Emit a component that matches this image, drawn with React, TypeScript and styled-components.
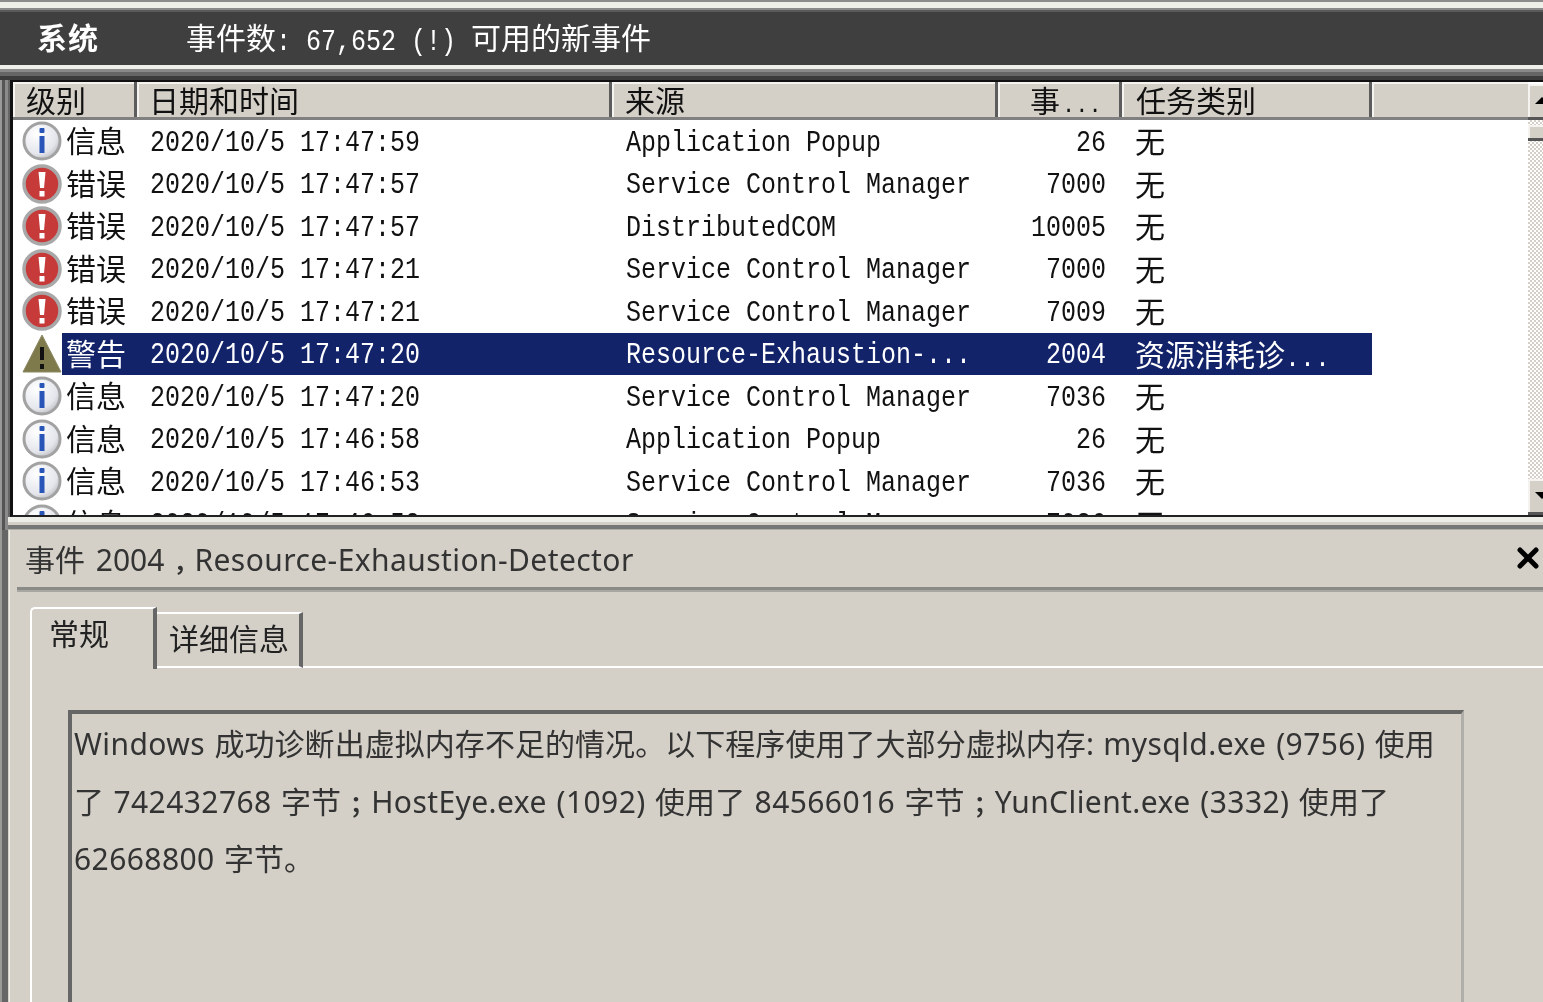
import styled, { createGlobalStyle } from 'styled-components';

const CJK = '"Noto Sans CJK SC", sans-serif';
const MONO = '"Liberation Mono", "Noto Sans CJK SC", monospace';
const UI = '"Noto Sans", "Noto Sans CJK SC", sans-serif';

const columns = '124px 475px 386px 124px 250px 1fr';

type Level = 'info' | 'error' | 'warning';

const rows: { level: Level; label: string; time: string; source: string; id: string; task: string; selected?: boolean }[] = [
  { level: 'info', label: '信息', time: '2020/10/5 17:47:59', source: 'Application Popup', id: '26', task: '无' },
  { level: 'error', label: '错误', time: '2020/10/5 17:47:57', source: 'Service Control Manager', id: '7000', task: '无' },
  { level: 'error', label: '错误', time: '2020/10/5 17:47:57', source: 'DistributedCOM', id: '10005', task: '无' },
  { level: 'error', label: '错误', time: '2020/10/5 17:47:21', source: 'Service Control Manager', id: '7000', task: '无' },
  { level: 'error', label: '错误', time: '2020/10/5 17:47:21', source: 'Service Control Manager', id: '7009', task: '无' },
  { level: 'warning', label: '警告', time: '2020/10/5 17:47:20', source: 'Resource-Exhaustion-...', id: '2004', task: '资源消耗诊...', selected: true },
  { level: 'info', label: '信息', time: '2020/10/5 17:47:20', source: 'Service Control Manager', id: '7036', task: '无' },
  { level: 'info', label: '信息', time: '2020/10/5 17:46:58', source: 'Application Popup', id: '26', task: '无' },
  { level: 'info', label: '信息', time: '2020/10/5 17:46:53', source: 'Service Control Manager', id: '7036', task: '无' },
  { level: 'info', label: '信息', time: '2020/10/5 17:46:52', source: 'Service Control Manager', id: '7036', task: '无' },
];

const GlobalStyle = createGlobalStyle`
  html, body { margin: 0; padding: 0; background: #d4d0c8; overflow: hidden; }
`;

const Page = styled.div`
  width: 1543px;
  height: 1002px;
  overflow: hidden;
  display: flex;
  flex-direction: column;
  background: #d4d0c8;
  filter: blur(0.55px);
`;

const TopEdge = styled.div`
  height: 12px;
  flex: none;
  background: linear-gradient(#8c8c8c 0 2px, #efefea 2px 8px, #8a8a8a 8px 10px, #5a5a5a 10px);
`;

const SummaryBar = styled.div`
  height: 53px;
  flex: none;
  box-sizing: border-box;
  padding: 0 0 5px 37px;
  display: flex;
  align-items: center;
  background: #3f3f3f;
  color: #fff;
  font-family: ${CJK};
  font-size: 30px;
`;

const SummaryTitle = styled.div`
  width: 149px;
  font-weight: 700;
  letter-spacing: 1px;
`;

const SummaryCount = styled.div`
  white-space: pre;
`;

const SummaryDigits = styled.span`
  display: inline-block;
  font-family: ${MONO};
  font-size: 25px;
  transform: scaleY(1.2);
  white-space: pre;
`;

const ListBand = styled.div`
  height: 15px;
  flex: none;
  background: linear-gradient(#efefea 0 4px, #8a8a8a 4px 7px, #666 7px 11px, #3c3c3c 11px);
`;

const ListFrame = styled.div`
  height: 437px;
  flex: none;
  box-sizing: border-box;
  margin-left: 10px;
  border-left: 3px solid #111;
  border-top: 2px solid #111;
  border-bottom: 2px solid #222;
  background: #fff;
  display: flex;
  box-shadow: -2px 0 #666, -5px 0 #8a8a8a, -8px 0 #555, -10px 0 #999;
`;

const ListBody = styled.div`
  flex: 1;
  min-width: 0;
`;

const HeaderRow = styled.div`
  height: 38px;
  box-sizing: border-box;
  display: grid;
  grid-template-columns: ${columns};
  background: #d4d0c8;
  border-bottom: 3px solid #808080;
`;

const HeaderCell = styled.div<{ $pad: number }>`
  box-sizing: border-box;
  padding-left: ${(p) => p.$pad}px;
  border-right: 3px solid #5c5c5c;
  box-shadow: inset 2px 2px #f4f3ef;
  font-family: ${CJK};
  font-size: 30px;
  line-height: 35px;
  height: 35px;
  color: #111;
  white-space: nowrap;

  &:last-child { border-right: none; }
`;

const HeaderDots = styled.span`
  font-family: ${MONO};
  font-size: 22px;
  margin-left: 2px;
`;

const RowList = styled.div`
  height: 395px;
  overflow: hidden;
  display: grid;
  grid-auto-rows: 42.5px;
`;

const Row = styled.div<{ $selected?: boolean }>`
  display: grid;
  grid-template-columns: ${columns};
  grid-template-rows: 42.5px;
  align-items: stretch;
  color: ${(p) => (p.$selected ? '#fff' : '#111')};
  --row-bg: ${(p) => (p.$selected ? '#12236a' : 'transparent')};
`;

const LevelCell = styled.div`
  display: flex;
  align-items: center;
`;

const IconSlot = styled.div`
  width: 49px;
  flex: none;
  height: 100%;
  box-sizing: border-box;
  padding-left: 9px;
  display: flex;
  align-items: center;
`;

const LevelLabel = styled.div`
  flex: 1;
  height: 100%;
  box-sizing: border-box;
  padding-left: 4px;
  background: var(--row-bg);
  font-family: ${CJK};
  font-size: 30px;
  line-height: 38px;
  white-space: nowrap;
`;

const Cell = styled.div<{ $pad?: number; $right?: number }>`
  box-sizing: border-box;
  background: var(--row-bg);
  padding-left: ${(p) => p.$pad ?? 0}px;
  padding-right: ${(p) => p.$right ?? 0}px;
  white-space: nowrap;
  display: flex;
  align-items: center;
  justify-content: ${(p) => (p.$right ? 'flex-end' : 'flex-start')};
`;

const MonoText = styled.span`
  display: inline-block;
  margin-top: 4px;
  font-family: ${MONO};
  font-size: 25px;
  transform: scaleY(1.2);
`;

const TaskText = styled.span`
  margin-top: -2px;
  font-family: ${CJK};
  font-size: 30px;
  line-height: 40px;
`;

const TaskDots = styled.span`
  font-family: ${MONO};
  font-size: 25px;
  line-height: 1;
`;

const BlankCell = styled.div``;

const ScrollBar = styled.div`
  width: 15px;
  flex: none;
  display: flex;
  flex-direction: column;
  margin-top: 2px;
  background: repeating-conic-gradient(#d4d0c8 0 25%, #fff 0 50%) 0 0 / 4px 4px;
`;

const ScrollButton = styled.div`
  height: 36px;
  flex: none;
  background: #d4d0c8;
  box-shadow: inset 2px 2px #f4f3ef;
  border-bottom: 3px solid #555;
  box-sizing: border-box;
  display: flex;
  align-items: center;
  justify-content: center;
  overflow: hidden;
`;

const Arrow = styled.div<{ $down?: boolean }>`
  width: 0;
  height: 0;
  flex: none;
  margin-left: 12px;
  border-left: 7px solid transparent;
  border-right: 7px solid transparent;
  border-${(p) => (p.$down ? 'top' : 'bottom')}: 7px solid #000;
`;

const ScrollThumb = styled.div`
  height: 16px;
  flex: none;
  margin-top: 5px;
  box-sizing: border-box;
  background: #d4d0c8;
  box-shadow: inset 2px 2px #f4f3ef;
  border-bottom: 3px solid #555;
`;

const ScrollTrack = styled.div`
  flex: 1;
`;

const Splitter = styled.div`
  height: 13px;
  flex: none;
  margin-left: 8px;
  background: linear-gradient(#eeeee9 0 5px, #d4d0c8 5px 8px, #777 8px 12px, #b0aea8 12px);
  box-shadow: -3px 0 #8a8a8a, -6px 0 #555, -8px 0 #999;
`;

const Detail = styled.div`
  flex: 1;
  min-height: 0;
  display: flex;
`;

const DetailEdge = styled.div`
  width: 17px;
  flex: none;
  background: linear-gradient(90deg, #9a9a96 0 2px, #666 2px 8px, #d4d0c8 8px 9px, #efefea 9px 10px, #d4d0c8 10px);
`;

const DetailBody = styled.div`
  flex: 1;
  min-width: 0;
  display: flex;
  flex-direction: column;
`;

const DetailHeader = styled.div`
  height: 57px;
  flex: none;
  box-sizing: border-box;
  padding: 0 0 2px 8px;
  display: flex;
  align-items: center;
  justify-content: space-between;
  font-family: ${UI};
  font-size: 30px;
  color: #333;
  white-space: pre;
  word-spacing: 3px;
`;

const CloseIcon = styled.svg`
  width: 22px;
  height: 22px;
  margin-right: 4px;
`;

const Latin = styled.span`
  letter-spacing: 0.42px;
`;

const WidePunct = styled.span`
  font-size: 24px;
  font-weight: 700;
  line-height: 1;
  margin: 0 -3px 0 9px;
`;

const HeaderRule = styled.div`
  height: 5px;
  flex: none;
  background: linear-gradient(#8a8a86 0 3px, #a8a6a0 3px);
`;

const TabStrip = styled.div`
  height: 76px;
  flex: none;
  padding-left: 13px;
  display: flex;
  align-items: flex-end;
  box-sizing: border-box;
`;

const TabLine = styled.div`
  flex: 1;
  height: 2px;
  background: #fff;
`;

const TabButton = styled.div<{ $active?: boolean }>`
  box-sizing: border-box;
  height: ${(p) => (p.$active ? 62 : 56)}px;
  width: ${(p) => (p.$active ? 127 : 146)}px;
  padding: ${(p) => (p.$active ? '0 0 10px 17px' : '0 0 0 12px')};
  margin-bottom: ${(p) => (p.$active ? -1 : 0)}px;
  border-top: 2px solid #fff;
  border-left: ${(p) => (p.$active ? '2px solid #fff' : 'none')};
  border-right: 4px solid #666;
  border-bottom: ${(p) => (p.$active ? 'none' : '2px solid #fff')};
  border-top-left-radius: ${(p) => (p.$active ? 5 : 0)}px;
  font-family: ${CJK};
  font-size: 30px;
  line-height: 46px;
  color: #222;
  white-space: nowrap;
`;

const TabPage = styled.div`
  flex: 1;
  min-height: 0;
  margin-left: 13px;
  padding: 42px 0 0 36px;
  border-left: 2px solid #fff;
`;

const MessageBox = styled.div`
  width: 1396px;
  height: 400px;
  box-sizing: border-box;
  border-top: 4px solid #666;
  border-left: 4px solid #666;
  border-right: 3px solid #b0aea8;
  padding: 1px 0 0 2px;
  font-family: ${UI};
  font-size: 30px;
  line-height: 57.5px;
  color: #333;
  letter-spacing: 0.05px;
  word-spacing: 1.5px;
`;

const MessageLine = styled.div`
  height: 57.5px;
  white-space: nowrap;
`;

function LevelIcon({ level }: { level: Level }) {
  if (level === 'warning') {
    return (
      <svg width="40" height="40" viewBox="0 0 40 40">
        <path d="M20 1 L39 38 H1 Z" fill="#7f7a4c" stroke="#8c8a62" strokeWidth="1" strokeLinejoin="round" />
        <rect x="18" y="13" width="4" height="13" fill="#111" />
        <rect x="18" y="30" width="4" height="5" fill="#111" />
      </svg>
    );
  }
  if (level === 'error') {
    return (
      <svg width="40" height="40" viewBox="0 0 40 40">
        <circle cx="20" cy="20" r="18" fill="#c63a3a" stroke="#a8a8a8" strokeWidth="3.5" />
        <path d="M16.5 8 H23.5 L22 24 H18 Z" fill="#fff" />
        <rect x="17.5" y="27" width="5" height="5.5" fill="#fff" />
      </svg>
    );
  }
  return (
    <svg width="40" height="40" viewBox="0 0 40 40">
      <defs>
        <radialGradient id="infoFill" cx="35%" cy="30%" r="80%">
          <stop offset="0%" stopColor="#ffffff" />
          <stop offset="70%" stopColor="#e4e6ec" />
          <stop offset="100%" stopColor="#b4b6bc" />
        </radialGradient>
      </defs>
      <circle cx="20" cy="20" r="18" fill="url(#infoFill)" stroke="#a2a2a2" strokeWidth="3" />
      <rect x="17.5" y="7" width="5" height="5" rx="1" fill="#2a55b8" />
      <rect x="17.5" y="15" width="5" height="17" fill="#2a55b8" />
    </svg>
  );
}

export default function App() {
  return (
    <Page>
      <GlobalStyle />
      <TopEdge />
      <SummaryBar>
        <SummaryTitle>系统</SummaryTitle>
        <SummaryCount>
          事件数<SummaryDigits>: 67,652 (!) </SummaryDigits>可用的新事件
        </SummaryCount>
      </SummaryBar>
      <ListBand />
      <ListFrame>
        <ListBody>
          <HeaderRow>
            <HeaderCell $pad={13}>级别</HeaderCell>
            <HeaderCell $pad={12}>日期和时间</HeaderCell>
            <HeaderCell $pad={13}>来源</HeaderCell>
            <HeaderCell $pad={32}>
              事<HeaderDots>...</HeaderDots>
            </HeaderCell>
            <HeaderCell $pad={14}>任务类别</HeaderCell>
            <HeaderCell $pad={0} />
          </HeaderRow>
          <RowList>
            {rows.map((row, i) => (
              <Row key={i} $selected={row.selected}>
                <LevelCell>
                  <IconSlot>
                    <LevelIcon level={row.level} />
                  </IconSlot>
                  <LevelLabel>{row.label}</LevelLabel>
                </LevelCell>
                <Cell $pad={13}>
                  <MonoText>{row.time}</MonoText>
                </Cell>
                <Cell $pad={14}>
                  <MonoText>{row.source}</MonoText>
                </Cell>
                <Cell $right={16}>
                  <MonoText>{row.id}</MonoText>
                </Cell>
                <Cell $pad={13}>
                  {row.selected ? (
                    <TaskText>
                      资源消耗诊<TaskDots>...</TaskDots>
                    </TaskText>
                  ) : (
                    <TaskText>{row.task}</TaskText>
                  )}
                </Cell>
                <BlankCell />
              </Row>
            ))}
          </RowList>
        </ListBody>
        <ScrollBar>
          <ScrollButton>
            <Arrow />
          </ScrollButton>
          <ScrollThumb />
          <ScrollTrack />
          <ScrollButton>
            <Arrow $down />
          </ScrollButton>
        </ScrollBar>
      </ListFrame>
      <Splitter />
      <Detail>
        <DetailEdge />
        <DetailBody>
          <DetailHeader>
            <span>
              事件 2004<WidePunct>，</WidePunct>
              <Latin>Resource-Exhaustion-Detector</Latin>
            </span>
            <CloseIcon viewBox="0 0 22 22">
              <path d="M3 3 L19 19 M19 3 L3 19" stroke="#000" strokeWidth="5" strokeLinecap="round" />
            </CloseIcon>
          </DetailHeader>
          <HeaderRule />
          <TabStrip>
            <TabButton $active>常规</TabButton>
            <TabButton>详细信息</TabButton>
            <TabLine />
          </TabStrip>
          <TabPage>
            <MessageBox>
              <MessageLine>
                <Latin>Windows</Latin> 成功诊断出虚拟内存不足的情况。以下程序使用了大部分虚拟内存: <Latin>mysqld.exe (9756)</Latin> 使用
              </MessageLine>
              <MessageLine>
                了 <Latin>742432768</Latin> 字节<WidePunct>；</WidePunct>
                <Latin>HostEye.exe (1092)</Latin> 使用了 <Latin>84566016</Latin> 字节<WidePunct>；</WidePunct>
                <Latin>YunClient.exe (3332)</Latin> 使用了
              </MessageLine>
              <MessageLine>
                <Latin>62668800</Latin> 字节。
              </MessageLine>
            </MessageBox>
          </TabPage>
        </DetailBody>
      </Detail>
    </Page>
  );
}
